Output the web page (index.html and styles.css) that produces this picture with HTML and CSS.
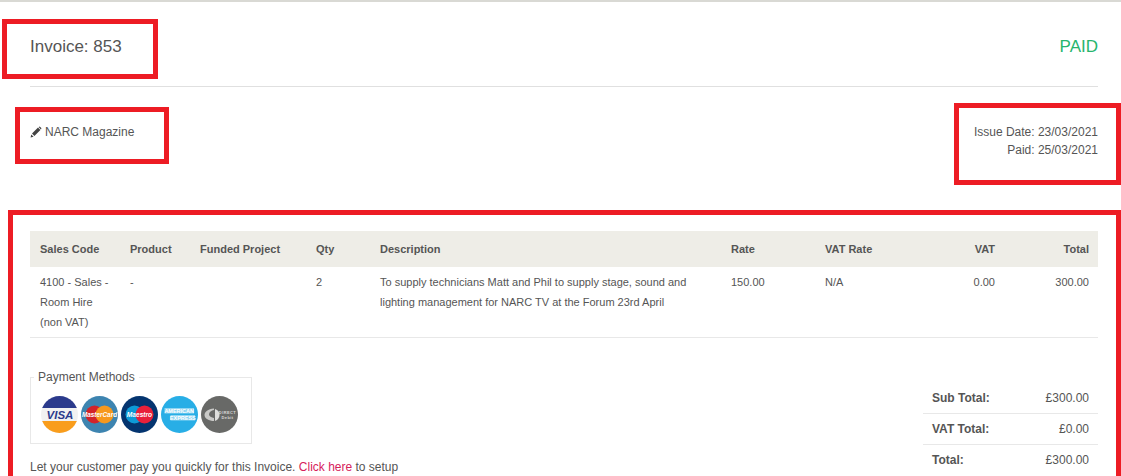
FILE: index.html
```html
<!DOCTYPE html>
<html lang="en">
<head>
<meta charset="utf-8">
<title>Invoice 853</title>
<link rel="stylesheet" href="styles.css">
</head>
<body>
<main class="page">
  <header class="head">
    <h1 class="title">Invoice: 853</h1>
    <div class="status">PAID</div>
  </header>
  <section class="meta">
    <div class="contact">
      <svg class="pencil" viewBox="0 0 12 12" width="12" height="12" aria-hidden="true"><path d="M0.6 11.4 L1.2 8.4 L3.6 10.8 Z M2 7.6 L8 1.6 L10.4 4 L4.4 10 Z M8.8 0.9 Q9.5 0.3 10.2 0.9 L11.1 1.8 Q11.7 2.5 11.1 3.2 L10.9 3.4 L8.6 1.1 Z" fill="#444"/></svg>
      <span>NARC Magazine</span>
    </div>
    <div class="dates">
      <div>Issue Date: 23/03/2021</div>
      <div>Paid: 25/03/2021</div>
    </div>
  </section>
  <table class="items">
    <colgroup>
      <col class="c1"><col class="c2"><col class="c3"><col class="c4"><col class="c5"><col class="c6"><col class="c7"><col class="c8"><col class="c9">
    </colgroup>
    <thead>
      <tr>
        <th>Sales Code</th><th>Product</th><th>Funded Project</th><th>Qty</th><th>Description</th><th>Rate</th><th>VAT Rate</th><th class="num">VAT</th><th class="num">Total</th>
      </tr>
    </thead>
    <tbody>
      <tr>
        <td>4100 - Sales - Room Hire (non VAT)</td><td>-</td><td></td><td>2</td>
        <td>To supply technicians Matt and Phil to supply stage, sound and lighting management for NARC TV at the Forum 23rd April</td>
        <td>150.00</td><td>N/A</td><td class="num">0.00</td><td class="num">300.00</td>
      </tr>
    </tbody>
  </table>
  <section class="foot">
    <div class="pay">
      <fieldset class="methods">
        <legend>Payment Methods</legend>
        <div class="cards">
          <svg class="card" viewBox="0 0 37 37" aria-label="Visa"><defs><clipPath id="cv"><circle cx="18.5" cy="18.5" r="18.5"/></clipPath></defs><g clip-path="url(#cv)"><rect width="37" height="37" fill="#f1f1f1"/><rect width="37" height="12" fill="#2b3a8c"/><rect y="25" width="37" height="12" fill="#f99d1c"/></g><text x="19" y="22.5" class="t-visa">VISA</text></svg>
          <svg class="card" viewBox="0 0 37 37" aria-label="MasterCard"><circle cx="18.5" cy="18.5" r="18.5" fill="#3d84b0"/><circle cx="13.5" cy="18.5" r="9" fill="#d2232a"/><circle cx="23.5" cy="18.5" r="9" fill="#f7981d"/><text x="18.5" y="20.7" class="t-mc">MasterCard</text></svg>
          <svg class="card" viewBox="0 0 37 37" aria-label="Maestro"><circle cx="18.5" cy="18.5" r="18.5" fill="#04346f"/><circle cx="13.5" cy="18.5" r="9" fill="#0d9ad7"/><circle cx="23.5" cy="18.5" r="9" fill="#e8203a"/><text x="18.5" y="20.7" class="t-ms">Maestro</text></svg>
          <svg class="card" viewBox="0 0 37 37" aria-label="American Express"><circle cx="18.5" cy="18.5" r="18.5" fill="#28aee6"/><rect x="3.5" y="12" width="29.5" height="5.5" fill="#8fd5f2"/><rect x="9.5" y="19" width="24.5" height="5.5" fill="#8fd5f2"/><text x="18.2" y="16.8" class="t-ax">AMERICAN</text><text x="21.8" y="23.8" class="t-ax">EXPRESS</text></svg>
          <svg class="card" viewBox="0 0 37 37" aria-label="Direct Debit"><circle cx="18.5" cy="18.5" r="18.5" fill="#686967"/><path d="M13 12.5 C7 13 3.5 16 3.5 19 C3.5 22.5 8 25 13 25 L13 22 C10.5 21.5 8 20.5 8 18.5 C8 16 10.5 14.5 13 14 Z" fill="#c9c9c7"/><path d="M14 13 L14 25 C17 24 18.5 21.5 18.5 18.5 C18.5 16 17 14 14 13 Z" fill="#dededc"/><text x="26.5" y="17.5" class="t-dd">DIRECT</text><text x="26.5" y="22.8" class="t-dd">Debit</text></svg>
        </div>
      </fieldset>
      <p class="setup">Let your customer pay you quickly for this Invoice. <a href="#">Click here</a> to setup</p>
    </div>
    <table class="totals">
      <tr><th>Sub Total:</th><td>£300.00</td></tr>
      <tr><th>VAT Total:</th><td>£0.00</td></tr>
      <tr class="grand"><th>Total:</th><td>£300.00</td></tr>
    </table>
  </section>
</main>
<div class="mark mark-title"></div>
<div class="mark mark-contact"></div>
<div class="mark mark-dates"></div>
<div class="mark mark-body"></div>
</body>
</html>
```
FILE: styles.css
```css
html, body {
  margin: 0;
  padding: 0;
  height: 476px;
  overflow: hidden;
  background: #fff;
}
body {
  position: relative;
  border-top: 2px solid #d9d9d4;
  box-sizing: border-box;
  font-family: "Liberation Sans", Arial, sans-serif;
  font-size: 12px;
  color: #555;
}
.page {
  padding: 0 23px 0 30px;
  height: 474px;
  overflow: hidden;
}
.head {
  display: flex;
  justify-content: space-between;
  align-items: center;
  box-sizing: border-box;
  height: 85px;
  padding-top: 5px;
  border-bottom: 1px solid #e0e0e0;
}
.title {
  margin: 0;
  font-size: 17px;
  font-weight: 400;
  color: #555;
}
.status {
  font-size: 17px;
  color: #27b56e;
}
.meta {
  display: flex;
  justify-content: space-between;
  height: 144px;
  padding-top: 35px;
  box-sizing: border-box;
  line-height: 18px;
}
.contact {
  display: flex;
  align-items: flex-start;
  gap: 3px;
  margin-top: 1px;
  color: #555;
}
.pencil {
  margin-top: 3px;
}
.dates {
  text-align: right;
  margin-top: 1px;
}
.items {
  width: 1068px;
  table-layout: fixed;
  border-collapse: collapse;
  font-size: 11px;
}
.c1 { width: 90px; }
.c2 { width: 70px; }
.c3 { width: 116px; }
.c4 { width: 64px; }
.c5 { width: 351px; }
.c6 { width: 94px; }
.c7 { width: 115px; }
.c8 { width: 74px; }
.c9 { width: 94px; }
.items th {
  background: #eeede7;
  height: 36px;
  padding: 0 10px;
  text-align: left;
  font-weight: 700;
  font-size: 11px;
  color: #555;
}
.items td {
  padding: 5px 9px 5px 10px;
  vertical-align: top;
  line-height: 20px;
  border-bottom: 1px solid #e8e8e8;
}
.items .num {
  text-align: right;
  padding-right: 9px;
}
.foot {
  display: flex;
  justify-content: space-between;
  align-items: flex-start;
  padding-top: 32px;
}
.pay {
  width: 600px;
}
.methods {
  width: 222px;
  height: 74px;
  box-sizing: border-box;
  margin: 0;
  padding: 13px 0 0 10px;
  border: 1px solid #e8e8e8;
}
.methods legend {
  padding: 0 4px;
  margin-left: -7px;
  font-size: 12px;
  line-height: 14px;
}
.cards {
  display: flex;
  gap: 3px;
  margin-top: -1px;
}
.card {
  width: 37px;
  height: 37px;
  display: block;
}
.setup {
  margin: 16px 0 0;
  font-size: 12px;
}
.setup a {
  color: #d6215b;
  text-decoration: none;
}
.t-visa {
  font: italic 700 11.5px "Liberation Sans", sans-serif;
  fill: #2b3a8c;
  text-anchor: middle;
}
.t-mc {
  font: italic 700 6.4px "Liberation Sans", sans-serif;
  fill: #fff;
  text-anchor: middle;
}
.t-ms {
  font: italic 700 6.6px "Liberation Sans", sans-serif;
  fill: #fff;
  text-anchor: middle;
}
.t-ax {
  font: 700 5.5px "Liberation Sans", sans-serif;
  fill: #fff;
  text-anchor: middle;
}
.t-dd {
  font: 700 4px "Liberation Sans", sans-serif;
  letter-spacing: 0.4px;
  fill: #d8d8d6;
  text-anchor: middle;
}
.totals {
  width: 175px;
  border-collapse: separate;
  border-spacing: 0;
  margin-top: 13px;
}
.totals th,
.totals td {
  box-sizing: border-box;
  height: 31px;
  padding: 0 9px;
  font-size: 12px;
  border-bottom: 1px solid #e8e8e8;
}
.totals .grand th,
.totals .grand td {
  height: 29px;
  border-bottom: 0;
}
.totals th {
  text-align: left;
  font-weight: 700;
}
.totals td {
  text-align: right;
}
.mark {
  position: absolute;
  box-sizing: border-box;
  border: 5px solid #ed1c24;
}
.mark-title { left: 2px; top: 17px; width: 156px; height: 60px; }
.mark-contact { left: 15px; top: 105px; width: 154px; height: 57px; }
.mark-dates { left: 954px; top: 101px; width: 167px; height: 82px; }
.mark-body { left: 8px; top: 208px; width: 1113px; height: 266px; border-bottom: 0; }
```
